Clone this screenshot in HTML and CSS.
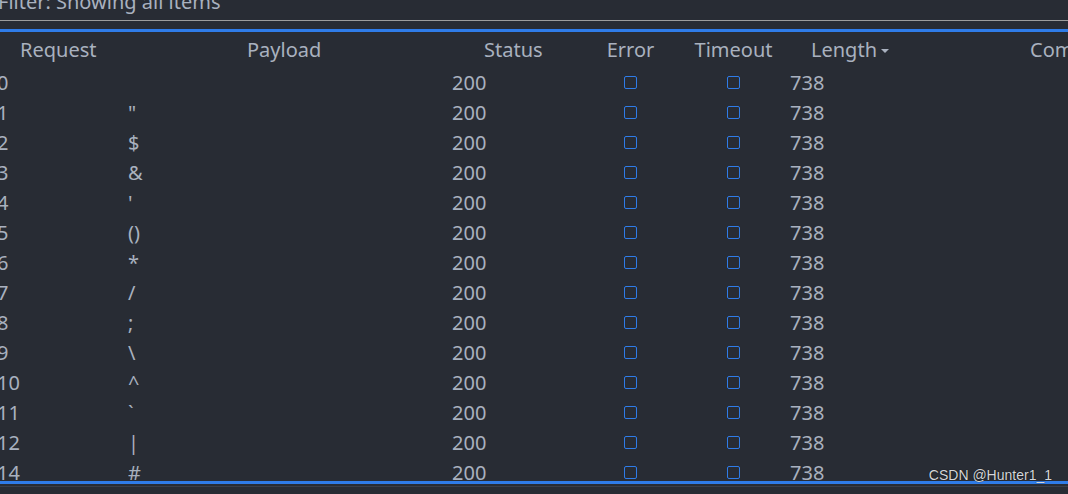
FILE: index.html
```html
<!DOCTYPE html>
<html lang="en">
<head>
  <meta charset="UTF-8" />
  <title>Intruder results</title>
  <link rel="stylesheet" href="styles.css">
</head>
<body>
  <div class="filter">
    <div class="filter-text">Filter: Showing all items</div>
  </div>

  <div class="results">
    <div class="row head">
      <div class="cell c-req">Request</div>
      <div class="cell c-pay">Payload</div>
      <div class="cell c-status">Status</div>
      <div class="cell c-check">Error</div>
      <div class="cell c-check">Timeout</div>
      <div class="cell c-len">Length<span class="sort"></span></div>
      <div class="cell c-comment">Comment</div>
    </div>

    <div class="body">
      <div class="row"><div class="cell c-req">0</div><div class="cell c-pay"></div><div class="cell c-status">200</div><div class="cell c-check"><span class="box"></span></div><div class="cell c-check"><span class="box"></span></div><div class="cell c-len">738</div><div class="cell"></div></div>
      <div class="row"><div class="cell c-req">1</div><div class="cell c-pay">"</div><div class="cell c-status">200</div><div class="cell c-check"><span class="box"></span></div><div class="cell c-check"><span class="box"></span></div><div class="cell c-len">738</div><div class="cell"></div></div>
      <div class="row"><div class="cell c-req">2</div><div class="cell c-pay">$</div><div class="cell c-status">200</div><div class="cell c-check"><span class="box"></span></div><div class="cell c-check"><span class="box"></span></div><div class="cell c-len">738</div><div class="cell"></div></div>
      <div class="row"><div class="cell c-req">3</div><div class="cell c-pay">&amp;</div><div class="cell c-status">200</div><div class="cell c-check"><span class="box"></span></div><div class="cell c-check"><span class="box"></span></div><div class="cell c-len">738</div><div class="cell"></div></div>
      <div class="row"><div class="cell c-req">4</div><div class="cell c-pay">'</div><div class="cell c-status">200</div><div class="cell c-check"><span class="box"></span></div><div class="cell c-check"><span class="box"></span></div><div class="cell c-len">738</div><div class="cell"></div></div>
      <div class="row"><div class="cell c-req">5</div><div class="cell c-pay">()</div><div class="cell c-status">200</div><div class="cell c-check"><span class="box"></span></div><div class="cell c-check"><span class="box"></span></div><div class="cell c-len">738</div><div class="cell"></div></div>
      <div class="row"><div class="cell c-req">6</div><div class="cell c-pay">*</div><div class="cell c-status">200</div><div class="cell c-check"><span class="box"></span></div><div class="cell c-check"><span class="box"></span></div><div class="cell c-len">738</div><div class="cell"></div></div>
      <div class="row"><div class="cell c-req">7</div><div class="cell c-pay">/</div><div class="cell c-status">200</div><div class="cell c-check"><span class="box"></span></div><div class="cell c-check"><span class="box"></span></div><div class="cell c-len">738</div><div class="cell"></div></div>
      <div class="row"><div class="cell c-req">8</div><div class="cell c-pay">;</div><div class="cell c-status">200</div><div class="cell c-check"><span class="box"></span></div><div class="cell c-check"><span class="box"></span></div><div class="cell c-len">738</div><div class="cell"></div></div>
      <div class="row"><div class="cell c-req">9</div><div class="cell c-pay">\</div><div class="cell c-status">200</div><div class="cell c-check"><span class="box"></span></div><div class="cell c-check"><span class="box"></span></div><div class="cell c-len">738</div><div class="cell"></div></div>
      <div class="row"><div class="cell c-req">10</div><div class="cell c-pay">^</div><div class="cell c-status">200</div><div class="cell c-check"><span class="box"></span></div><div class="cell c-check"><span class="box"></span></div><div class="cell c-len">738</div><div class="cell"></div></div>
      <div class="row"><div class="cell c-req">11</div><div class="cell c-pay">`</div><div class="cell c-status">200</div><div class="cell c-check"><span class="box"></span></div><div class="cell c-check"><span class="box"></span></div><div class="cell c-len">738</div><div class="cell"></div></div>
      <div class="row"><div class="cell c-req">12</div><div class="cell c-pay">|</div><div class="cell c-status">200</div><div class="cell c-check"><span class="box"></span></div><div class="cell c-check"><span class="box"></span></div><div class="cell c-len">738</div><div class="cell"></div></div>
      <div class="row"><div class="cell c-req">14</div><div class="cell c-pay">#</div><div class="cell c-status">200</div><div class="cell c-check"><span class="box"></span></div><div class="cell c-check"><span class="box"></span></div><div class="cell c-len">738</div><div class="cell"></div></div>
    </div>
  </div>

  <div class="statusbar"></div>

  <div class="watermark">CSDN @Hunter1_1</div>
</body>
</html>
```

FILE: styles.css
```css
body {
  margin: 0;
  height: 494px;
  overflow: hidden;
  background: #282c34;
  color: #a9b1bf;
  font-family: "Noto Sans", "Open Sans", sans-serif;
  font-size: 20px;
  position: relative;
}

.filter {
  height: 20px;
  overflow: hidden;
  border-bottom: 1px solid #9d9d9d;
}

.filter-text {
  line-height: 20px;
  margin-top: -8px;
  margin-left: -2px;
  white-space: nowrap;
}

.results {
  margin-top: 8px;
  border-top: 3px solid #2f7ce8;
  border-bottom: 3px solid #2f7ce8;
}

.row {
  display: grid;
  grid-template-columns: 114px 326px 144px 93px 113px 128px 1fr;
  height: 30px;
  line-height: 31px;
  white-space: nowrap;
}

.row.head {
  height: 35px;
  line-height: 36px;
}

.body {
  height: 414px;
  overflow: hidden;
}

.c-req { margin-left: -3px; }
.c-pay { padding-left: 14px; }
.c-status { padding-left: 12px; }
.c-len { padding-left: 0; }

.c-check {
  display: flex;
  justify-content: center;
  align-items: center;
}

.head .c-req { margin-left: 0; padding-left: 20px; }
.head .c-pay { padding-left: 133px; }
.head .c-status { padding-left: 44px; }
.head .c-check { display: block; text-align: center; }
.head .c-len { padding-left: 21px; }
.head .c-comment { padding-left: 112px; }

.sort {
  display: inline-block;
  width: 0;
  height: 0;
  margin-left: 4px;
  vertical-align: 4px;
  border-left: 4px solid transparent;
  border-right: 4px solid transparent;
  border-top: 4px solid #a9b1bf;
}

.box {
  width: 13px;
  height: 13px;
  box-sizing: border-box;
  border: 1.5px solid #2f7ce8;
  border-radius: 2px;
  margin-top: -1px;
}

.statusbar {
  margin-top: 2px;
  border-top: 1px solid #3a3e46;
}

.watermark {
  position: absolute;
  right: 16px;
  top: 466px;
  font-family: "Liberation Sans", Arial, sans-serif;
  font-size: 14px;
  line-height: 18px;
  color: #d4d6da;
  text-shadow: 0 0 1px #000;
}
```
